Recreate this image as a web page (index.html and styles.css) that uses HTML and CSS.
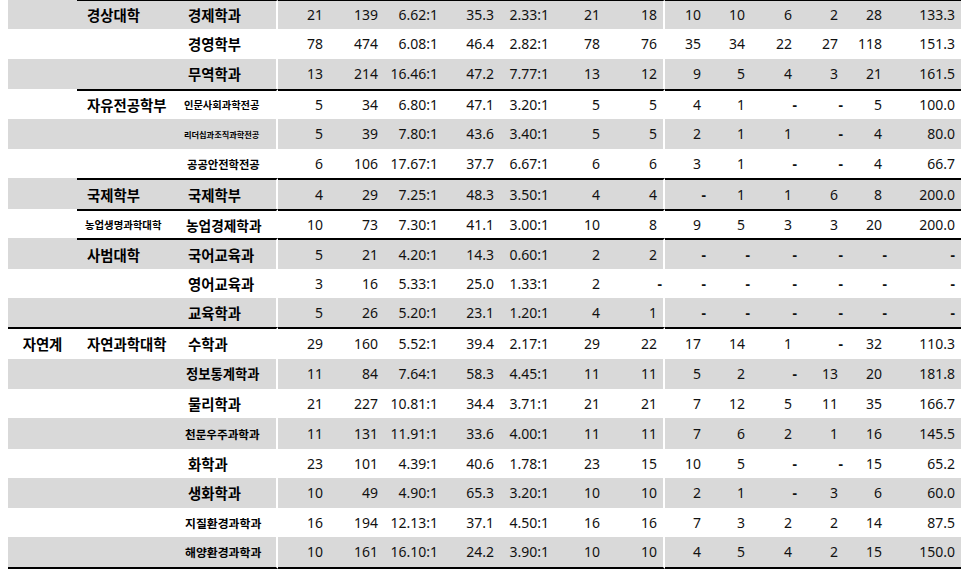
FILE: index.html
```html
<!DOCTYPE html>
<html lang="ko">
<head>
<meta charset="utf-8">
<title>모집결과</title>
<link rel="stylesheet" href="styles.css">
</head>
<body>
<table class="sheet">
<colgroup>
<col class="w69"><col class="w106"><col class="w95"><col class="w51"><col class="w55"><col class="w60"><col class="w56"><col class="w55"><col class="w51"><col class="w59"><col class="w42"><col class="w44"><col class="w47"><col class="w46"><col class="w44"><col class="w73">
</colgroup>
<tbody>
<tr class="g first h29"><td class="a"></td><td class="t b">경상대학</td><td class="t c sep">경제학과</td><td>21</td><td>139</td><td>6.62:1</td><td>35.3</td><td>2.33:1</td><td>21</td><td class="sep">18</td><td>10</td><td>10</td><td>6</td><td>2</td><td>28</td><td>133.3</td></tr>
<tr class="h30"><td class="a"></td><td class="t b"></td><td class="t c sep">경영학부</td><td>78</td><td>474</td><td>6.08:1</td><td>46.4</td><td>2.82:1</td><td>78</td><td class="sep">76</td><td>35</td><td>34</td><td>22</td><td>27</td><td>118</td><td>151.3</td></tr>
<tr class="g h30"><td class="a"></td><td class="t b"></td><td class="t c sep">무역학과</td><td>13</td><td>214</td><td>16.46:1</td><td>47.2</td><td>7.77:1</td><td>13</td><td class="sep">12</td><td>9</td><td>5</td><td>4</td><td>3</td><td>21</td><td>161.5</td></tr>
<tr class="grp h30"><td class="a"></td><td class="t b">자유전공학부</td><td class="t c sep f10">인문사회과학전공</td><td>5</td><td>34</td><td>6.80:1</td><td>47.1</td><td>3.20:1</td><td>5</td><td class="sep">5</td><td>4</td><td>1</td><td class="z">-</td><td class="z">-</td><td>5</td><td>100.0</td></tr>
<tr class="g h30"><td class="a"></td><td class="t b"></td><td class="t c sep f8">리더십과조직과학전공</td><td>5</td><td>39</td><td>7.80:1</td><td>43.6</td><td>3.40:1</td><td>5</td><td class="sep">5</td><td>2</td><td>1</td><td>1</td><td class="z">-</td><td>4</td><td>80.0</td></tr>
<tr class="h29"><td class="a"></td><td class="t b"></td><td class="t c sep f11">공공안전학전공</td><td>6</td><td>106</td><td>17.67:1</td><td>37.7</td><td>6.67:1</td><td>6</td><td class="sep">6</td><td>3</td><td>1</td><td class="z">-</td><td class="z">-</td><td>4</td><td>66.7</td></tr>
<tr class="g grp h31"><td class="a"></td><td class="t b">국제학부</td><td class="t c sep">국제학부</td><td>4</td><td>29</td><td>7.25:1</td><td>48.3</td><td>3.50:1</td><td>4</td><td class="sep">4</td><td class="z">-</td><td>1</td><td>1</td><td>6</td><td>8</td><td>200.0</td></tr>
<tr class="grp h29"><td class="a"></td><td class="t b f10b">농업생명과학대학</td><td class="t c sep f13b">농업경제학과</td><td>10</td><td>73</td><td>7.30:1</td><td>41.1</td><td>3.00:1</td><td>10</td><td class="sep">8</td><td>9</td><td>5</td><td>3</td><td>3</td><td>20</td><td>200.0</td></tr>
<tr class="g grp h31"><td class="a"></td><td class="t b">사범대학</td><td class="t c sep">국어교육과</td><td>5</td><td>21</td><td>4.20:1</td><td>14.3</td><td>0.60:1</td><td>2</td><td class="sep">2</td><td class="z">-</td><td class="z">-</td><td class="z">-</td><td class="z">-</td><td class="z">-</td><td class="zp">-</td></tr>
<tr class="h29"><td class="a"></td><td class="t b"></td><td class="t c sep">영어교육과</td><td>3</td><td>16</td><td>5.33:1</td><td>25.0</td><td>1.33:1</td><td>2</td><td class="sep z">-</td><td class="z">-</td><td class="z">-</td><td class="z">-</td><td class="z">-</td><td class="z">-</td><td class="zp">-</td></tr>
<tr class="g h29"><td class="a"></td><td class="t b"></td><td class="t c sep">교육학과</td><td>5</td><td>26</td><td>5.20:1</td><td>23.1</td><td>1.20:1</td><td>4</td><td class="sep">1</td><td class="z">-</td><td class="z">-</td><td class="z">-</td><td class="z">-</td><td class="z">-</td><td class="zp">-</td></tr>
<tr class="sec h32"><td class="a t">자연계</td><td class="t b">자연과학대학</td><td class="t c sep">수학과</td><td>29</td><td>160</td><td>5.52:1</td><td>39.4</td><td>2.17:1</td><td>29</td><td class="sep">22</td><td>17</td><td>14</td><td>1</td><td class="z">-</td><td>32</td><td>110.3</td></tr>
<tr class="g h30"><td class="a"></td><td class="t b"></td><td class="t c sep f13">정보통계학과</td><td>11</td><td>84</td><td>7.64:1</td><td>58.3</td><td>4.45:1</td><td>11</td><td class="sep">11</td><td>5</td><td>2</td><td class="z">-</td><td>13</td><td>20</td><td>181.8</td></tr>
<tr class="h29"><td class="a"></td><td class="t b"></td><td class="t c sep">물리학과</td><td>21</td><td>227</td><td>10.81:1</td><td>34.4</td><td>3.71:1</td><td>21</td><td class="sep">21</td><td>7</td><td>12</td><td>5</td><td>11</td><td>35</td><td>166.7</td></tr>
<tr class="g h31"><td class="a"></td><td class="t b"></td><td class="t c sep f115">천문우주과학과</td><td>11</td><td>131</td><td>11.91:1</td><td>33.6</td><td>4.00:1</td><td>11</td><td class="sep">11</td><td>7</td><td>6</td><td>2</td><td>1</td><td>16</td><td>145.5</td></tr>
<tr class="h29"><td class="a"></td><td class="t b"></td><td class="t c sep">화학과</td><td>23</td><td>101</td><td>4.39:1</td><td>40.6</td><td>1.78:1</td><td>23</td><td class="sep">15</td><td>10</td><td>5</td><td class="z">-</td><td class="z">-</td><td>15</td><td>65.2</td></tr>
<tr class="g h30"><td class="a"></td><td class="t b"></td><td class="t c sep">생화학과</td><td>10</td><td>49</td><td>4.90:1</td><td>65.3</td><td>3.20:1</td><td>10</td><td class="sep">10</td><td>2</td><td>1</td><td class="z">-</td><td>3</td><td>6</td><td>60.0</td></tr>
<tr class="h29"><td class="a"></td><td class="t b"></td><td class="t c sep f12">지질환경과학과</td><td>16</td><td>194</td><td>12.13:1</td><td>37.1</td><td>4.50:1</td><td>16</td><td class="sep">16</td><td>7</td><td>3</td><td>2</td><td>2</td><td>14</td><td>87.5</td></tr>
<tr class="g last h32"><td class="a"></td><td class="t b"></td><td class="t c sep f12">해양환경과학과</td><td>10</td><td>161</td><td>16.10:1</td><td>24.2</td><td>3.90:1</td><td>10</td><td class="sep">10</td><td>4</td><td>5</td><td>4</td><td>2</td><td>15</td><td>150.0</td></tr>
</tbody>
</table>
</body>
</html>
```
FILE: styles.css
```css
html, body {
  background: #ffffff;
}
body {
  margin: 0 0 0 8px;
}
.sheet {
  border-collapse: separate;
  border-spacing: 0;
  table-layout: fixed;
  width: 953px;
  font-family: "Noto Sans", "Noto Sans CJK KR", sans-serif;
  font-size: 14px;
  color: #111;
}
.w69 { width: 69px; }
.w106 { width: 106px; }
.w95 { width: 95px; }
.w51 { width: 51px; }
.w55 { width: 55px; }
.w60 { width: 60px; }
.w56 { width: 56px; }
.w59 { width: 59px; }
.w42 { width: 42px; }
.w44 { width: 44px; }
.w47 { width: 47px; }
.w46 { width: 46px; }
.w73 { width: 73px; }

.sheet td {
  box-sizing: border-box;
  padding: 0 6px 0 0;
  text-align: right;
  vertical-align: middle;
  white-space: nowrap;
  overflow: hidden;
  line-height: 16px;
}
.h29 { height: 29px; }
.h30 { height: 30px; }
.h31 { height: 31px; }
.h32 { height: 32px; }

.g td { background: #d9d9d9; }

.sheet td.t {
  text-align: left;
  font-family: "Noto Sans CJK KR", sans-serif;
  font-weight: 700;
  font-size: 14.4px;
  color: #000;
}
.sheet td.a {
  text-align: center;
  padding: 0;
}
.sheet td.b { padding-left: 10px; }
.sheet td.c { padding-left: 5px; }
.sheet td.sep { border-right: 2px solid #ffffff; }
.sheet td.z { padding-right: 1px; font-weight: 700; }
.sheet td.zp { font-weight: 700; }

.sheet td.f13 { font-size: 13.3px; padding-left: 3px; }
.sheet td.f13b { font-size: 13.7px; padding-left: 3px; }
.sheet td.f12 { font-size: 11.85px; padding-left: 2px; }
.sheet td.f115 { font-size: 11.6px; padding-left: 2px; }
.sheet td.f11 { font-size: 11.3px; padding-left: 4px; }
.sheet td.f10 { font-size: 10.25px; padding-left: 1px; }
.sheet td.f10b { font-size: 10.4px; padding-left: 8px; }
.sheet td.f8 { font-size: 8.2px; padding-left: 1px; }

.first td:not(.a) { border-top: 1px solid #000; }
.grp td:not(.a) { border-top: 2px solid #000; }
.sec td { border-top: 2px solid #000; }
.last td { border-bottom: 2px solid #000; }
```
